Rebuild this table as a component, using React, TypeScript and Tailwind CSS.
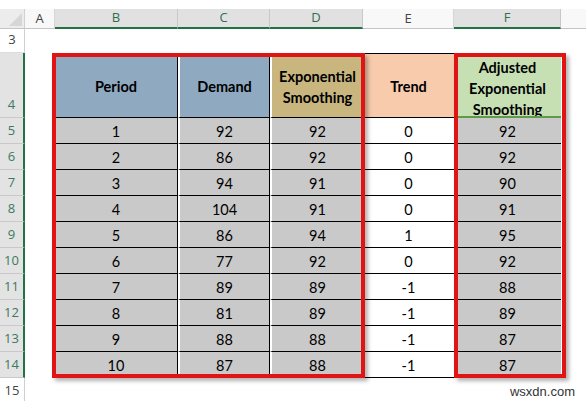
import React from "react";

const rows: [number, number, number, number, number][] = [
  [1, 92, 92, 0, 92],
  [2, 86, 92, 0, 92],
  [3, 94, 91, 0, 90],
  [4, 104, 91, 0, 91],
  [5, 86, 94, 1, 95],
  [6, 77, 92, 0, 92],
  [7, 89, 89, -1, 88],
  [8, 81, 89, -1, 89],
  [9, 88, 88, -1, 87],
  [10, 87, 88, -1, 87],
];

function ColHead({ label, w, sel }: { label: string; w: string; sel?: boolean }) {
  return (
    <div
      className={
        sel
          ? `${w} h-[20px] flex items-center justify-center bg-[#e1e1e1] text-[#2f6f4f] border-r border-r-[#c8c8c8] border-b-2 border-b-[#217346]`
          : `${w} h-[20px] flex items-center justify-center bg-[#f8f8f8] text-[#444] border-r border-r-[#d6d6d6] border-b border-b-[#c4c4cc]`
      }
    >
      {label}
    </div>
  );
}

function RowHead({ n, h, sel }: { n: number; h: string; sel?: boolean }) {
  return (
    <div
      className={
        sel
          ? `${h} flex items-end justify-center pb-[3px] bg-[#e3e3e3] text-[#3b7a5c] border-b border-b-[#c9c9c9] border-r-2 border-r-[#217346]`
          : `${h} flex items-end justify-center pb-[3px] bg-white text-[#444] border-b border-b-[#dcdcdc] border-r border-r-[#d0d0d0]`
      }
    >
      {n}
    </div>
  );
}

export default function App() {
  return (
    <div className="relative w-[586px] h-[401px] overflow-hidden bg-white font-['Lato',sans-serif] text-black">
      <div className="h-[9px] bg-white" />
      {/* column headers */}
      <div className="flex text-[13px] font-['Open_Sans',sans-serif]">
        <div className="w-[25px] h-[20px] bg-[#ececec] border-r border-r-[#d0d0d0] border-b border-b-[#c4c4cc] relative">
          <svg width="25" height="20" className="block">
            <polygon points="22,4 22,17 9,17" fill="#d6d6d6" />
          </svg>
        </div>
        <ColHead label="A" w="w-[30px]" />
        <ColHead label="B" w="w-[123px]" sel />
        <ColHead label="C" w="w-[92px]" sel />
        <ColHead label="D" w="w-[93px]" sel />
        <ColHead label="E" w="w-[91px]" />
        <ColHead label="F" w="w-[107px]" sel />
        <div className="flex-1 h-[20px] bg-[#f8f8f8] border-b border-b-[#c4c4cc]" />
      </div>

      <div className="flex">
        {/* row headers */}
        <div className="w-[25px] flex flex-col text-[13px] font-['Open_Sans',sans-serif]">
          <RowHead n={3} h="h-[24px]" />
          <RowHead n={4} h="h-[65px]" sel />
          {rows.map((r, i) => (
            <RowHead key={i} n={i + 5} h="h-[26px]" sel />
          ))}
          <RowHead n={15} h="h-[26px]" />
        </div>

        {/* sheet */}
        <div className="flex-1 flex flex-col">
          <div className="h-[24px]" />
          <div className="ml-[30px] grid grid-cols-[123px_92px_93px_91px_107px] text-[14.5px] border-t border-black w-[506px]">
            {/* header row */}
            <div className="h-[64px] flex items-center justify-center pt-[3px] bg-[#8fa9c0] font-bold border-r border-black border-b">
              Period
            </div>
            <div className="h-[64px] flex items-center justify-center pt-[3px] bg-[#8fa9c0] font-bold border-l-2 border-l-white border-r border-r-black border-b border-b-black">
              Demand
            </div>
            <div className="h-[64px] flex items-center justify-center pt-[2px] bg-[#c9b67e] font-bold border-l-2 border-l-white border-b border-b-black text-center leading-[21px]">
              Exponential
              <br />
              Smoothing
            </div>
            <div className="h-[64px] flex items-center justify-center pt-[3px] bg-[#f8cbad] font-bold border-b border-black">
              Trend
            </div>
            <div className="h-[64px] flex items-start justify-center pt-[3px] bg-[#c6e0b4] font-bold border-b-2 border-b-[#5f9a48] text-center leading-[21px] overflow-hidden">
              Adjusted
              <br />
              Exponential
              <br />
              Smoothing
            </div>
            {rows.map((r, i) => (
              <React.Fragment key={i}>
                <div className="h-[26px] flex items-center justify-center pt-[2px] bg-[#c9c9c9] border-r border-r-black border-b border-b-black">
                  {r[0]}
                </div>
                <div className="h-[26px] flex items-center justify-center pt-[2px] bg-[#c9c9c9] border-l-2 border-l-white border-r border-r-black border-b border-b-black">
                  {r[1]}
                </div>
                <div className="h-[26px] flex items-center justify-center pt-[2px] bg-[#c9c9c9] border-l-2 border-l-white border-b border-b-black">
                  {r[2]}
                </div>
                <div className="h-[26px] flex items-center justify-center pt-[2px] bg-white border-b border-b-black">
                  {r[3]}
                </div>
                <div className="h-[26px] flex items-center justify-center pt-[2px] bg-[#c9c9c9] border-b border-b-black">
                  {r[4]}
                </div>
              </React.Fragment>
            ))}
          </div>
        </div>
      </div>

      {/* red highlight rectangles */}
      <div className="absolute left-[52px] top-[53px] w-[313px] h-[325px] border-4 border-[#e01414] shadow-[3px_3px_4px_rgba(0,0,0,0.3)]" />
      <div className="absolute left-[454px] top-[53px] w-[112px] h-[325px] border-4 border-[#e01414] shadow-[3px_3px_4px_rgba(0,0,0,0.3)]" />

      <div className="absolute right-[11px] top-[385px] text-[13px] leading-[14px] text-[#333] font-['Liberation_Sans',sans-serif]">
        wsxdn.com
      </div>
    </div>
  );
}
